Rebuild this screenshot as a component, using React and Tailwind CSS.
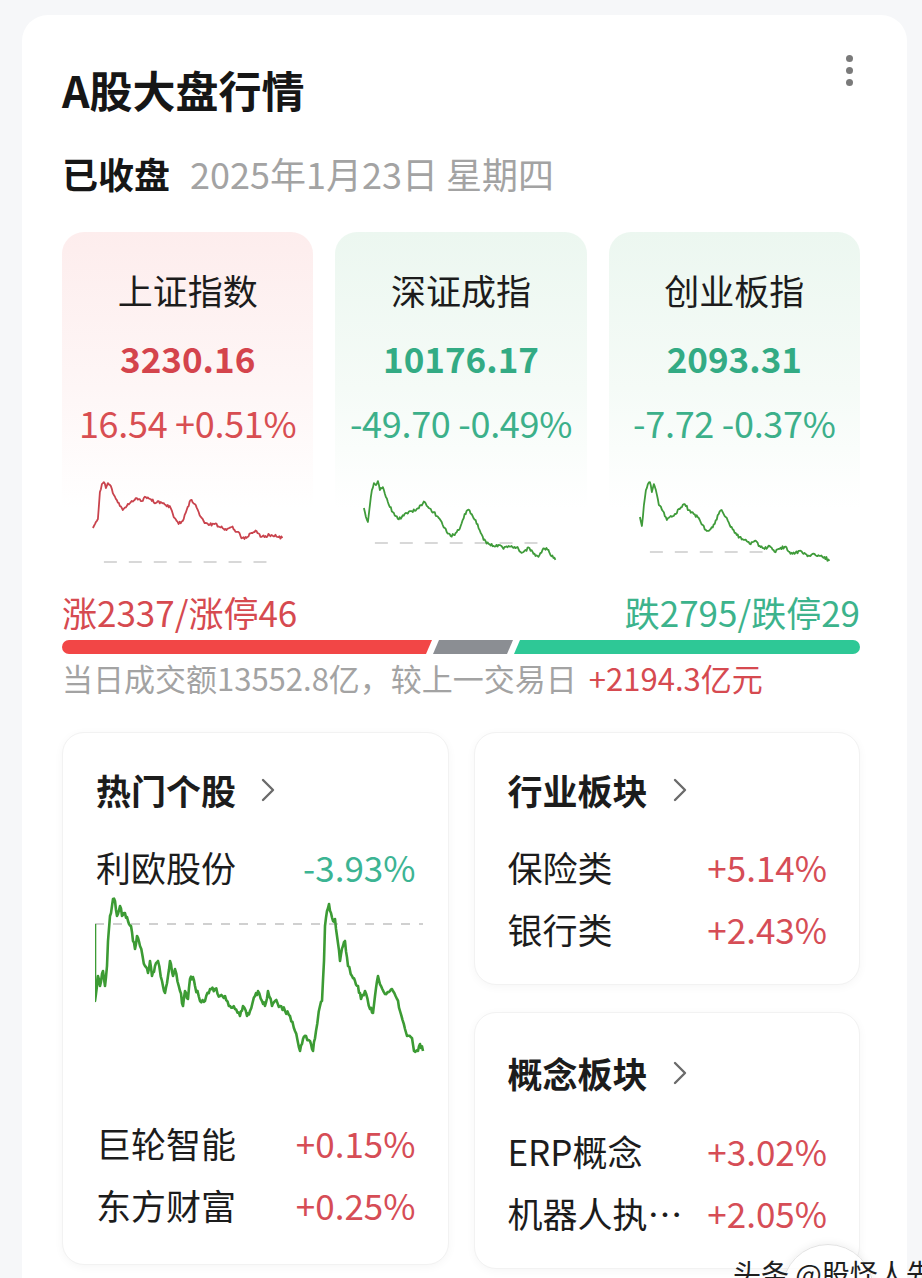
import React from "react";

function rng(seed) {
  let s = seed >>> 0;
  return () => {
    s = (s + 0x6d2b79f5) >>> 0;
    let t = s;
    t = Math.imul(t ^ (t >>> 15), t | 1);
    t ^= t + Math.imul(t ^ (t >>> 7), t | 61);
    return ((t ^ (t >>> 14)) >>> 0) / 4294967296;
  };
}

function buildPath(pts, seed, jit, step) {
  const r = rng(seed);
  let d = `M${pts[0][0]} ${pts[0][1]}`;
  for (let i = 1; i < pts.length; i++) {
    const [x0, y0] = pts[i - 1];
    const [x1, y1] = pts[i];
    const n = Math.max(1, Math.round(Math.abs(x1 - x0) / step));
    for (let k = 1; k <= n; k++) {
      const t = k / n;
      const x = x0 + (x1 - x0) * t;
      let y = y0 + (y1 - y0) * t;
      if (k < n) y += (r() - 0.5) * 2 * jit;
      d += ` L${x.toFixed(1)} ${y.toFixed(1)}`;
    }
  }
  return d;
}

const INDICES = [
  {
    name: "上证指数",
    value: "3230.16",
    change: "16.54 +0.51%",
    up: true,
    x: 62,
    dash: [104, 272, 562],
    pts: [[93,528],[96,522],[98,519],[100,492],[102,484],[104,482],[106,488],[108,483],[111,486],[114,495],[117,500],[120,506],[123,510],[127,506],[131,502],[136,498],[141,501],[146,497],[151,499],[156,503],[161,502],[166,505],[171,508],[175,518],[179,524],[183,521],[187,510],[191,500],[195,504],[199,512],[204,521],[209,525],[215,524],[220,527],[226,529],[232,527],[238,532],[243,538],[248,537],[252,533],[257,531],[261,537],[266,536],[272,535],[278,537],[283,538]],
  },
  {
    name: "深证成指",
    value: "10176.17",
    change: "-49.70 -0.49%",
    up: false,
    x: 336,
    dash: [376, 548, 543],
    pts: [[365,508],[367,517],[369,522],[371,505],[373,490],[375,483],[377,485],[379,481],[381,490],[384,487],[387,497],[391,507],[395,513],[399,519],[403,517],[408,513],[413,511],[418,509],[422,505],[426,502],[430,508],[435,512],[440,518],[444,525],[448,532],[452,536],[457,533],[462,526],[466,514],[469,510],[473,514],[477,520],[481,530],[485,540],[490,544],[495,546],[500,545],[505,549],[510,546],[515,548],[519,547],[523,553],[527,550],[531,548],[535,554],[540,557],[544,550],[548,548],[552,555],[557,560]],
  },
  {
    name: "创业板指",
    value: "2093.31",
    change: "-7.72 -0.37%",
    up: false,
    x: 609,
    dash: [650, 775, 552],
    pts: [[640,517],[642,526],[644,505],[646,490],[648,484],[650,482],[652,492],[654,484],[656,490],[659,505],[663,511],[667,520],[671,516],[675,514],[680,509],[685,504],[689,510],[694,514],[699,518],[703,525],[707,531],[711,529],[715,524],[719,514],[722,510],[726,517],[730,525],[735,533],[740,537],[745,540],[750,544],[755,541],[760,546],[765,549],[770,546],[775,552],[780,549],[785,547],[790,552],[795,554],[800,551],[805,553],[810,556],[815,554],[820,556],[825,557],[830,561]],
  },
];

const BIG_PTS = [[95,923],[95,1000],[98,975],[100,985],[103,970],[105,985],[107,965],[108,940],[110,915],[112,905],[113,898],[115,900],[117,915],[120,905],[122,915],[125,912],[128,920],[131,925],[133,940],[135,948],[137,935],[140,945],[145,965],[148,972],[150,960],[152,975],[155,965],[158,960],[162,980],[165,992],[168,975],[170,960],[173,975],[175,968],[180,990],[183,1005],[185,990],[188,998],[190,978],[193,976],[195,985],[200,1000],[205,1000],[210,988],[215,988],[220,995],[225,995],[230,1005],[235,1008],[240,1015],[243,1005],[247,1015],[250,1010],[255,995],[258,990],[262,1000],[265,1005],[268,990],[272,1005],[275,1000],[280,1005],[285,1010],[290,1015],[295,1030],[300,1050],[303,1038],[306,1035],[310,1040],[313,1050],[316,1030],[320,1005],[322,1000],[324,960],[325,925],[327,910],[329,903],[331,912],[333,920],[335,918],[337,935],[340,960],[343,945],[345,940],[348,965],[352,975],[355,980],[358,985],[361,998],[365,990],[370,1008],[373,1012],[375,995],[378,975],[381,985],[385,993],[390,990],[393,990],[397,998],[400,1010],[405,1028],[407,1035],[412,1037],[414,1050],[418,1050],[420,1043],[423,1050]];

function Chevron() {
  return (
    <svg width="16" height="26" viewBox="0 0 16 26" className="shrink-0">
      <polyline points="3,3 13,13 3,23" fill="none" stroke="#6b6b6b" strokeWidth="2.4" strokeLinecap="round" strokeLinejoin="round" />
    </svg>
  );
}

function IndexCard({ d, seed }) {
  const bg = d.up
    ? "bg-[linear-gradient(180deg,#fdeded_0%,#fef6f6_45%,#ffffff_80%)]"
    : "bg-[linear-gradient(180deg,#ecf7f0_0%,#f5fbf7_45%,#ffffff_80%)]";
  const valColor = d.up ? "text-[#d4444c]" : "text-[#33ab84]";
  const chgColor = d.up ? "text-[#d84e52]" : "text-[#3cb08a]";
  const lineColor = d.up ? "#c9434d" : "#3f9b3a";
  return (
    <div className={`${bg} rounded-[22px] pt-[38px] pb-[10px] flex flex-col items-center`}>
      <div className="text-[35px] leading-[40px] text-[#1c1c1c]">{d.name}</div>
      <div className={`mt-[28px] text-[35px] leading-[40px] font-semibold ${valColor}`}>{d.value}</div>
      <div className={`mt-[24px] text-[36px] leading-[40px] tracking-[-0.3px] ${chgColor}`}>{d.change}</div>
      <svg className="mt-[34px] w-full h-[92px]" viewBox={`${d.x} 476 252 92`}>
        <line x1={d.dash[0]} x2={d.dash[1]} y1={d.dash[2]} y2={d.dash[2]} stroke="#d8d8d8" strokeWidth="2" strokeDasharray="13 12" />
        <path d={buildPath(d.pts, seed, 1.6, 1.0)} fill="none" stroke={lineColor} strokeWidth="1.8" strokeLinejoin="round" />
      </svg>
    </div>
  );
}

function Row({ name, value, up = true, className = "" }) {
  return (
    <div className={`flex items-center justify-between text-[35px] leading-[40px] ${className}`}>
      <span className="text-[#1c1c1c]">{name}</span>
      <span className={up ? "text-[#d64d56]" : "text-[#3cb493]"}>{value}</span>
    </div>
  );
}

function Heading({ children }) {
  return (
    <div className="flex items-center gap-[24px]">
      <span className="text-[35px] leading-[40px] font-semibold text-[#1c1c1c]">{children}</span>
      <Chevron />
    </div>
  );
}

const cardCls = "bg-white rounded-[22px] border border-[#f2f2f2] shadow-[0_2px_10px_rgba(0,0,0,0.04)]";

export default function App() {
  return (
    <div className="relative w-[922px] h-[1278px] overflow-hidden bg-[#f6f7f9] [font-family:'Noto_Sans_CJK_SC','Noto_Sans',sans-serif]">
      <div className="relative ml-[22px] mr-[15px] mt-[15px] bg-white rounded-t-[26px] pl-[40px] pr-[47px] pt-[50px] min-h-[1400px]">
        <div className="absolute top-[40px] right-[54px] flex flex-col gap-[5px]">
          <span className="w-[7px] h-[7px] rounded-full bg-[#7a7a7a]" />
          <span className="w-[7px] h-[7px] rounded-full bg-[#7a7a7a]" />
          <span className="w-[7px] h-[7px] rounded-full bg-[#7a7a7a]" />
        </div>

        <div className="text-[43px] leading-[48px] font-bold text-[#161616]">A股大盘行情</div>

        <div className="mt-[38px] flex items-center text-[36px] leading-[44px]">
          <span className="font-bold text-[#161616]">已收盘</span>
          <span className="ml-[20px] text-[#a3a3a3]">2025年1月23日 星期四</span>
        </div>

        <div className="mt-[37px] grid grid-cols-3 gap-[22px]">
          {INDICES.map((d, i) => (
            <IndexCard key={d.name} d={d} seed={11 + i * 7} />
          ))}
        </div>

        <div className="mt-[14px] flex items-center justify-between text-[35px] leading-[40px]">
          <span className="text-[#d64a50]">涨2337/涨停46</span>
          <span className="text-[#3cb38c]">跌2795/跌停29</span>
        </div>

        <div className="mt-[8px] flex h-[14px] gap-[1px]">
          <div className="w-[370px] shrink-0 bg-[#f24646] rounded-l-full [clip-path:polygon(0_0,100%_0,calc(100%_-_6px)_100%,0_100%)]" />
          <div className="w-[80px] shrink-0 bg-[#8b8e93] [clip-path:polygon(6px_0,100%_0,calc(100%_-_6px)_100%,0_100%)]" />
          <div className="flex-1 bg-[#2ec896] rounded-r-full [clip-path:polygon(6px_0,100%_0,100%_100%,0_100%)]" />
        </div>

        <div className="mt-[6px] flex items-center text-[31px] leading-[36px]">
          <span className="text-[#a3a3a3]">当日成交额13552.8亿，较上一交易日</span>
          <span className="ml-[12px] text-[#d64a50]">+2194.3亿元</span>
        </div>

        <div className="mt-[36px] grid grid-cols-2 gap-[25px] items-start">
          <div className={`${cardCls} pl-[33px] pr-[32px] pt-[37px] pb-[39px]`}>
            <Heading>热门个股</Heading>
            <Row className="mt-[37px]" name="利欧股份" value="-3.93%" up={false} />
            <svg className="mt-[7px] w-[330px] h-[165px] -ml-[1px]" viewBox="95 893 330 165">
              <line x1="95" x2="423" y1="923" y2="923" stroke="#d0d0d0" strokeWidth="2" strokeDasharray="9 9" />
              <path d={buildPath(BIG_PTS, 5, 2.6, 1.2)} fill="none" stroke="#3c9b34" strokeWidth="2.6" strokeLinejoin="round" />
            </svg>
            <Row className="mt-[64px]" name="巨轮智能" value="+0.15%" />
            <Row className="mt-[22px]" name="东方财富" value="+0.25%" />
          </div>

          <div className="flex flex-col gap-[27px]">
            <div className={`${cardCls} pl-[33px] pr-[32px] pt-[37px] pb-[35px]`}>
              <Heading>行业板块</Heading>
              <Row className="mt-[37px]" name="保险类" value="+5.14%" />
              <Row className="mt-[22px]" name="银行类" value="+2.43%" />
            </div>
            <div className={`${cardCls} pl-[33px] pr-[32px] pt-[40px] pb-[35px]`}>
              <Heading>概念板块</Heading>
              <Row className="mt-[38px]" name="ERP概念" value="+3.02%" />
              <Row className="mt-[22px]" name="机器人执…" value="+2.05%" />
            </div>
          </div>
        </div>
      </div>

      <div className="absolute left-[782px] top-[1244px] w-[92px] h-[92px] rounded-full bg-white/80 border border-[#e2e2e2] shadow-[0_0_8px_rgba(0,0,0,0.08)]" />
      <div className="absolute left-[733px] top-[1256px] text-[28px] leading-[34px] text-[#1e1e1e] whitespace-nowrap">
        头条 @股怪人先
      </div>
    </div>
  );
}
